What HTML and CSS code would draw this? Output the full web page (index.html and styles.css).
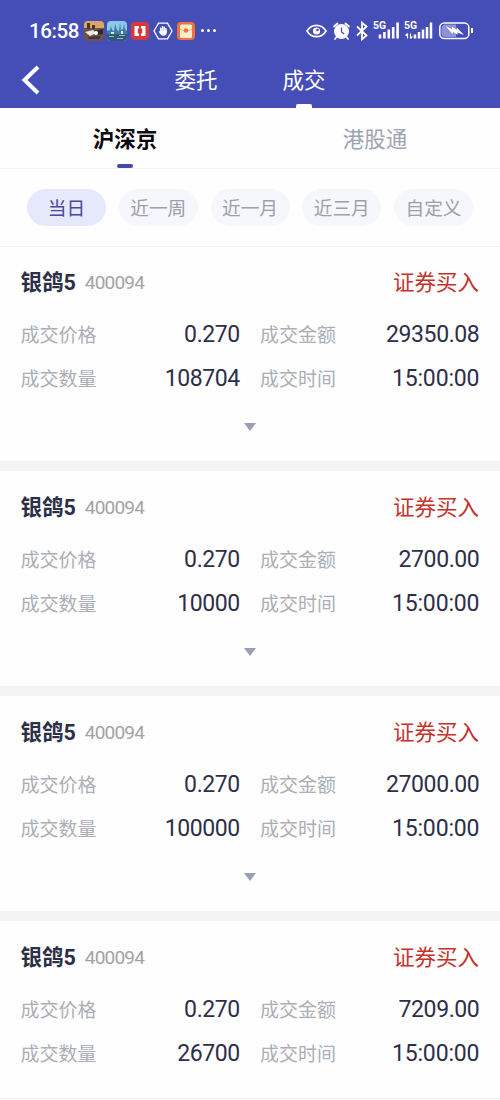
FILE: index.html
```html
<!DOCTYPE html>
<html lang="zh-CN">

<head>
    <meta charset="UTF-8">
    <meta name="viewport" content="width=device-width, initial-scale=1.0">
    <title>成交</title>
    <link rel="stylesheet" href="styles.css">
</head>

<body>
    <header class="top">
        <div class="status">
            <span class="clock">16:58</span>
            <div class="apps">
                <svg width="20" height="20" viewBox="0 0 20 20">
                    <rect width="20" height="20" rx="4" fill="#6b5648" />
                    <path d="M0 4a4 4 0 0 1 4-4h12a4 4 0 0 1 4 4v3H0z" fill="#d9a869" />
                    <path d="M3 2h3v6H3zM8 4h3v4H8z" fill="#4a3530" />
                    <path d="M1 11l8-2 3 3-6 3z" fill="#f1e4da" />
                    <path d="M10 10l9-2v5l-6 1z" fill="#2f2a35" />
                    <circle cx="12" cy="12" r="2" fill="#fff" />
                    <path d="M4 16l12-1v3H5z" fill="#44343a" />
                </svg>
                <svg width="20" height="20" viewBox="0 0 20 20">
                    <rect width="20" height="20" rx="4" fill="#8cc8e8" />
                    <path d="M0 10l3-1 1-4 1 4 2 1 1-7 2 6 2 1 1-8 1 7 2-1 1-5 1 5 2 2v3H0z" fill="#3f7da5" />
                    <path d="M0 13h20v3a4 4 0 0 1-4 4H4a4 4 0 0 1-4-4z" fill="#315a70" />
                    <path d="M2 15.500h5M10 17.500h6M12 14.500h6" stroke="#8fc0cf" />
                    <path d="M4 11h3v2H4zM14 10h2v3h-2z" fill="#d7e5d3" />
                </svg>
                <svg width="20" height="20" viewBox="0 0 20 20">
                    <rect x="1" y="1" width="18" height="18" rx="4" fill="#d8383d" />
                    <path d="M4.500 5H9v2.500H7.800v5H9V15H4.500zM15.500 5H11v2.500h1.200v5H11V15h4.500z" fill="#fff" />
                </svg>
                <svg width="20" height="20" viewBox="0 0 20 20" fill="none" stroke="#fff">
                    <path d="M5.500 2.200h9L19 10l-4.500 7.800h-9L1 10z" stroke-width="1.300" />
                    <path d="M7.700 11V7.200M9.500 10V5.700M11.300 10V6.200M13 11V7.800" stroke-width="1.500" stroke-linecap="round" />
                    <path d="M7 9.500h6.700v2.500c0 3-5 3.500-6.200 1.300L5.800 11z" fill="#fff" stroke="none" />
                </svg>
                <svg width="20" height="20" viewBox="0 0 20 20">
                    <rect x="1" y="1" width="18" height="18" rx="4" fill="#ee743b" />
                    <rect x="4" y="3.500" width="12" height="13.500" rx="1.500" fill="#ffeccb" />
                    <path d="M4 8q6 4 12 0" stroke="#f0ad6e" fill="none" />
                    <circle cx="10" cy="9.500" r="2.200" fill="#ee743b" />
                </svg>
            </div>
            <span class="more"><i></i><i></i><i></i></span>
            <div class="signals">
                <svg width="165" height="22" viewBox="0 0 165 22" fill="none" stroke="#fff">
                    <!-- eye -->
                    <path d="M1 11c4.500-7.500 14.500-7.500 19 0-4.500 7.500-14.500 7.500-19 0z" stroke-width="1.700" />
                    <circle cx="10.500" cy="11" r="3.600" fill="#fff" stroke="none" />
                    <circle cx="11.500" cy="10" r="1.300" fill="#454db7" stroke="none" />
                    <!-- alarm -->
                    <circle cx="35.500" cy="11.500" r="7.500" fill="#fff" stroke="none" />
                    <path d="M28 6.500l3.500-3M43 6.500l-3.500-3M30.500 17l-1.500 2M40.500 17l1.500 2" stroke-width="1.800" stroke-linecap="round" />
                    <path d="M35.500 7.500v4.500l2.700 2" stroke="#454db7" stroke-width="1.300" />
                    <!-- bluetooth -->
                    <path d="M51 6.500l9.500 9L56 19.300V2.700l4.500 3.800L51 15.500" stroke-width="1.800" />
                    <!-- signal bars -->
                    <path d="M74 18.500v-4M78.400 18.500v-6.500M82.800 18.500V9.500M87.200 18.500V7M91.600 18.500V2.500" stroke-width="2.600" />
                    <path d="M109 18.500v-4M113 18.500V12M117 18.500V9.500M121 18.500V7M125 18.500V2.500" stroke-width="2.500" />
                    <path d="M101.500 18.500v-5M99.500 15.500l2-2M104.500 13.500v5M104.500 18.500l2-2" stroke-width="1.200" />
                    <!-- battery -->
                    <rect x="133.800" y="3" width="29" height="15.500" rx="4.500" stroke-width="1.500" />
                    <path d="M139 4.500h11v12.500h-11q-3.500 0-3.500-3.500V8q0-3.500 3.500-3.500z" fill="#8e93d5" stroke="none" />
                    <path d="M139.500 6l6.500 3.300V6.700l4.500 3 .3-2.200L158 15l-6.500-2.500v2.300l-4.500-3-.4 2.200z" fill="#fff" stroke="none" />
                    <text class="net" x="67" y="9.300" textLength="13" lengthAdjust="spacingAndGlyphs">5G</text>
                    <text class="net" x="98" y="9.300" textLength="13" lengthAdjust="spacingAndGlyphs">5G</text>
                </svg>
                <span class="cap"></span>
            </div>
        </div>
        <nav class="nav">
            <svg class="back" width="20" height="30" viewBox="0 0 20 30">
                <path d="M18 2L4.500 15 18 28" fill="none" stroke="#fff" stroke-width="4" />
            </svg>
            <a class="nav-item">委托</a>
            <a class="nav-item active">成交</a>
        </nav>
    </header>

    <div class="tabs">
        <a class="tab active">沪深京</a>
        <a class="tab">港股通</a>
    </div>

    <div class="filters">
        <button class="chip active">当日</button>
        <button class="chip">近一周</button>
        <button class="chip">近一月</button>
        <button class="chip">近三月</button>
        <button class="chip">自定义</button>
    </div>

    <main class="list">
        <section class="card">
            <div class="head"><b class="name">银鸽5</b><span class="code">400094</span><span class="side">证券买入</span></div>
            <div class="grid">
                <div class="cell"><label>成交价格</label><span>0.270</span></div>
                <div class="cell"><label>成交金额</label><span>29350.08</span></div>
                <div class="cell"><label>成交数量</label><span>108704</span></div>
                <div class="cell"><label>成交时间</label><span class="time">15:00:00</span></div>
            </div>
            <div class="arrow"></div>
        </section>
        <section class="card">
            <div class="head"><b class="name">银鸽5</b><span class="code">400094</span><span class="side">证券买入</span></div>
            <div class="grid">
                <div class="cell"><label>成交价格</label><span>0.270</span></div>
                <div class="cell"><label>成交金额</label><span>2700.00</span></div>
                <div class="cell"><label>成交数量</label><span>10000</span></div>
                <div class="cell"><label>成交时间</label><span class="time">15:00:00</span></div>
            </div>
            <div class="arrow"></div>
        </section>
        <section class="card">
            <div class="head"><b class="name">银鸽5</b><span class="code">400094</span><span class="side">证券买入</span></div>
            <div class="grid">
                <div class="cell"><label>成交价格</label><span>0.270</span></div>
                <div class="cell"><label>成交金额</label><span>27000.00</span></div>
                <div class="cell"><label>成交数量</label><span>100000</span></div>
                <div class="cell"><label>成交时间</label><span class="time">15:00:00</span></div>
            </div>
            <div class="arrow"></div>
        </section>
        <section class="card last">
            <div class="head"><b class="name">银鸽5</b><span class="code">400094</span><span class="side">证券买入</span></div>
            <div class="grid">
                <div class="cell"><label>成交价格</label><span>0.270</span></div>
                <div class="cell"><label>成交金额</label><span>7209.00</span></div>
                <div class="cell"><label>成交数量</label><span>26700</span></div>
                <div class="cell"><label>成交时间</label><span class="time">15:00:00</span></div>
            </div>
        </section>
    </main>
</body>

</html>
```
FILE: styles.css
```css
* {
    box-sizing: border-box;
    padding: 0;
    margin: 0;
}

body {
    width: 500px;
    height: 1100px;
    overflow: hidden;
    background-color: #fefefe;
    font-family: Roboto, "Noto Sans CJK SC", sans-serif;
    color: #2d2f48;
}

.top {
    height: 108px;
    background-color: #454db7;
    color: white;
}

.status {
    height: 52px;
    padding: 9px 27px 0 29px;
    display: flex;
    align-items: center;
}

.clock {
    width: 55px;
    font-size: 20.5px;
    font-weight: 500;
    letter-spacing: -0.4px;
}

.apps {
    display: flex;
    gap: 3px;
}

.more {
    display: flex;
    gap: 3px;
    margin-left: 5px;
}

.more i {
    width: 3px;
    height: 3px;
    border-radius: 50%;
    background-color: white;
}

.signals {
    display: flex;
    align-items: center;
    margin-left: auto;
}

.signals svg {
    display: block;
}

.net {
    font-size: 10px;
    font-weight: 700;
    fill: white;
    stroke: none;
}

.cap {
    width: 2px;
    height: 5px;
    background-color: white;
}

.nav {
    height: 56px;
    display: flex;
    padding-left: 20px;
}

.back {
    margin: 13px 124px 0 0;
}

.nav-item {
    width: 64px;
    height: 56px;
    margin-right: 44px;
    font-size: 21.5px;
    line-height: 58px;
    text-align: center;
    position: relative;
}

.nav-item.active::after {
    content: "";
    position: absolute;
    left: 24px;
    bottom: 0;
    width: 16px;
    height: 4px;
    border-radius: 2px 2px 0 0;
    background-color: white;
}

.tabs {
    height: 61px;
    display: flex;
    border-bottom: 1px solid #f5f5f7;
}

.tab {
    height: 60px;
    flex: 1;
    font-size: 21.5px;
    line-height: 63px;
    text-align: center;
    color: #9da3b3;
    position: relative;
}

.tab.active {
    font-weight: 700;
    color: #08080f;
}

.tab.active::after {
    content: "";
    position: absolute;
    left: 117px;
    bottom: 0;
    width: 16px;
    height: 4px;
    border-radius: 2px;
    background-color: #454aa8;
}

.filters {
    height: 78px;
    display: flex;
    justify-content: space-between;
    padding: 20px 27px 0;
    border-bottom: 1px solid #f5f5f6;
}

.chip {
    width: 79px;
    height: 37px;
    padding-top: 3px;
    border: none;
    border-radius: 19px;
    background-color: #f6f7fc;
    color: #9b9fae;
    font-family: inherit;
    font-size: 18.7px;
    line-height: 34px;
}

.chip.active {
    background-color: #e6e8fb;
    color: #454a9c;
}

.card {
    height: 225px;
    padding: 18px 21px 0 20.5px;
    border-bottom: 10px solid #f3f4f5;
}

.card:first-child {
    height: 224px;
    padding-top: 17px;
}

.head {
    height: 33px;
    display: flex;
    align-items: center;
}

.name {
    font-size: 21.5px;
}

.code {
    margin: 3px 0 0 9px;
    font-size: 19px;
    letter-spacing: -0.8px;
    color: #a3a3a5;
}

.side {
    margin-left: auto;
    font-size: 21.5px;
    color: #c3332c;
}

.grid {
    display: grid;
    grid-template-columns: 219px 219px;
    column-gap: 20.5px;
    grid-auto-rows: 44.5px;
    padding-top: 15px;
}

.cell {
    display: flex;
    justify-content: space-between;
    align-items: center;
}

.cell label {
    margin-top: -2px;
    font-size: 19px;
    color: #acaeb6;
}

.cell span {
    font-size: 23px;
    letter-spacing: -0.4px;
    margin-right: -0.4px;
}

.cell .time {
    letter-spacing: -0.15px;
    margin-right: -0.4px;
}

.arrow {
    width: 0;
    margin: 22px auto 0;
    border: 6.5px solid transparent;
    border-top: 8px solid #9b9fb5;
    border-bottom: none;
}

.card.last {
    height: 178px;
    border-bottom: 1px solid #f0f0f2;
}
```
